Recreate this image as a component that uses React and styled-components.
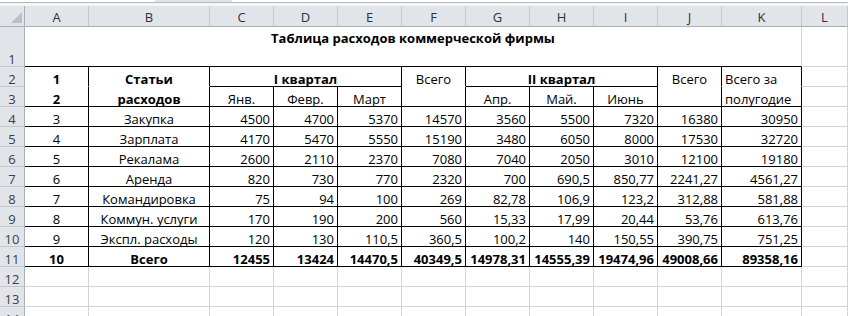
import React from "react";
import styled, { createGlobalStyle } from "styled-components";

const GlobalStyle = createGlobalStyle`
  html, body { margin: 0; padding: 0; background: #fff; overflow: hidden; }
  body { font-family: "Open Sans", "Noto Sans", sans-serif; }
`;

const GRID = "#d4d4d4";
const HEAD_BG = "#e1e5ea";
const HEAD_LINE = "#c3c8cf";
const HEAD_EDGE = "#a9b0b9";

const lineColor = (v) => (v === "k" ? "#000" : v === "n" ? "transparent" : GRID);

const Page = styled.div`
  width: 848px;
  height: 316px;
  overflow: hidden;
  background: #fff;
`;

const TopStrip = styled.div`
  display: flex;
  flex-direction: column;
  height: 6px;
`;

const FormulaEdge = styled.div`
  height: 2px;
  display: flex;
`;

const NameBoxEdge = styled.div`
  margin-left: 155px;
  width: 77px;
  background: #dfe2e6;
`;

const Rule = styled.div`
  height: 1px;
  background: #b3b8bf;
`;

const RuleGap = styled.div`
  height: 3px;
  background: #f4f5f7;
`;

const Sheet = styled.div`
  display: grid;
  grid-template-columns: 25px 64px 121px repeat(8, 64px) 80px 1fr;
  grid-template-rows: 21px 40px repeat(13, 20px);
  font-size: 13px;
  line-height: 14px;
  color: #000;
`;

const Corner = styled.div`
  box-sizing: border-box;
  position: relative;
  background: ${HEAD_BG};
  border-right: 1px solid ${HEAD_EDGE};
  border-bottom: 1px solid ${HEAD_EDGE};
  &::after {
    content: "";
    position: absolute;
    right: 2px;
    bottom: 3px;
    width: 11px;
    height: 11px;
    background: #b9bfc7;
    clip-path: polygon(100% 0, 100% 100%, 0 100%);
  }
`;

const ColHead = styled.div`
  box-sizing: border-box;
  display: flex;
  align-items: center;
  justify-content: center;
  padding-top: 2px;
  background: ${HEAD_BG};
  color: #2e3238;
  border-right: 1px solid ${HEAD_LINE};
  border-bottom: 1px solid ${HEAD_EDGE};
`;

const RowHead = styled.div`
  box-sizing: border-box;
  display: flex;
  align-items: flex-end;
  justify-content: center;
  background: ${HEAD_BG};
  color: #3a3f46;
  border-right: 1px solid ${HEAD_EDGE};
  border-bottom: 1px solid ${HEAD_LINE};
`;

const Cell = styled.div`
  box-sizing: border-box;
  grid-column: span ${(p) => p.$span || 1};
  display: flex;
  align-items: ${(p) => (p.$top ? "flex-start" : "flex-end")};
  justify-content: ${(p) =>
    p.$align === "left" ? "flex-start" : p.$align === "right" ? "flex-end" : "center"};
  padding: ${(p) => (p.$top ? "4px 3px 0" : "0 3px")};
  white-space: nowrap;
  font-weight: ${(p) => (p.$bold ? 700 : 400)};
  border-right: 1px solid ${(p) => lineColor(p.$r)};
  border-bottom: 1px solid ${(p) => lineColor(p.$b)};
`;

const columns = ["A", "B", "C", "D", "E", "F", "G", "H", "I", "J", "K", "L"];

const data = [
  [3, "Закупка", 4500, 4700, 5370, 14570, 3560, 5500, 7320, 16380, 30950],
  [4, "Зарплата", 4170, 5470, 5550, 15190, 3480, 6050, 8000, 17530, 32720],
  [5, "Рекалама", 2600, 2110, 2370, 7080, 7040, 2050, 3010, 12100, 19180],
  [6, "Аренда", 820, 730, 770, 2320, 700, "690,5", "850,77", "2241,27", "4561,27"],
  [7, "Командировка", 75, 94, 100, 269, "82,78", "106,9", "123,2", "312,88", "581,88"],
  [8, "Коммун. услуги", 170, 190, 200, 560, "15,33", "17,99", "20,44", "53,76", "613,76"],
  [9, "Экспл. расходы", 120, 130, "110,5", "360,5", "100,2", 140, "150,55", "390,75", "751,25"],
  [10, "Всего", 12455, 13424, "14470,5", "40349,5", "14978,31", "14555,39", "19474,96", "49008,66", "89358,16"],
];

const Blank = () => <Cell />;

export default function App() {
  return (
    <Page>
      <GlobalStyle />
      <TopStrip>
        <FormulaEdge>
          <NameBoxEdge />
        </FormulaEdge>
        <Rule />
        <RuleGap />
      </TopStrip>
      <Sheet>
        <Corner />
        {columns.map((c) => (
          <ColHead key={c}>{c}</ColHead>
        ))}

        {/* Row 1 */}
        <RowHead>1</RowHead>
        <Cell $span={11} $top $bold $b="k">
          Таблица расходов коммерческой фирмы
        </Cell>
        <Blank />

        {/* Row 2 */}
        <RowHead>2</RowHead>
        <Cell $bold $r="k" $b="n">1</Cell>
        <Cell $bold $r="k" $b="n">Статьи</Cell>
        <Cell $span={3} $bold $r="k" $b="k">I квартал</Cell>
        <Cell $r="k" $b="n">Всего</Cell>
        <Cell $span={3} $bold $r="k" $b="k">II квартал</Cell>
        <Cell $r="k" $b="n">Всего</Cell>
        <Cell $align="left" $r="k" $b="n">Всего за</Cell>
        <Blank />

        {/* Row 3 */}
        <RowHead>3</RowHead>
        <Cell $bold $r="k" $b="k">2</Cell>
        <Cell $bold $r="k" $b="k">расходов</Cell>
        <Cell $r="k" $b="k">Янв.</Cell>
        <Cell $r="k" $b="k">Февр.</Cell>
        <Cell $r="k" $b="k">Март</Cell>
        <Cell $r="k" $b="k" />
        <Cell $r="k" $b="k">Апр.</Cell>
        <Cell $r="k" $b="k">Май.</Cell>
        <Cell $r="k" $b="k">Июнь</Cell>
        <Cell $r="k" $b="k" />
        <Cell $align="left" $r="k" $b="k">полугодие</Cell>
        <Blank />

        {data.map((row, i) => {
          const bold = i === data.length - 1;
          return (
            <React.Fragment key={i}>
              <RowHead>{i + 4}</RowHead>
              {row.map((v, j) => (
                <Cell key={j} $bold={bold} $align={j < 2 ? "center" : "right"} $r="k" $b="k">
                  {v}
                </Cell>
              ))}
              <Blank />
            </React.Fragment>
          );
        })}

        {[12, 13, 14].map((n) => (
          <React.Fragment key={n}>
            <RowHead>{n}</RowHead>
            {columns.map((c) => (
              <Blank key={c} />
            ))}
          </React.Fragment>
        ))}
      </Sheet>
    </Page>
  );
}
